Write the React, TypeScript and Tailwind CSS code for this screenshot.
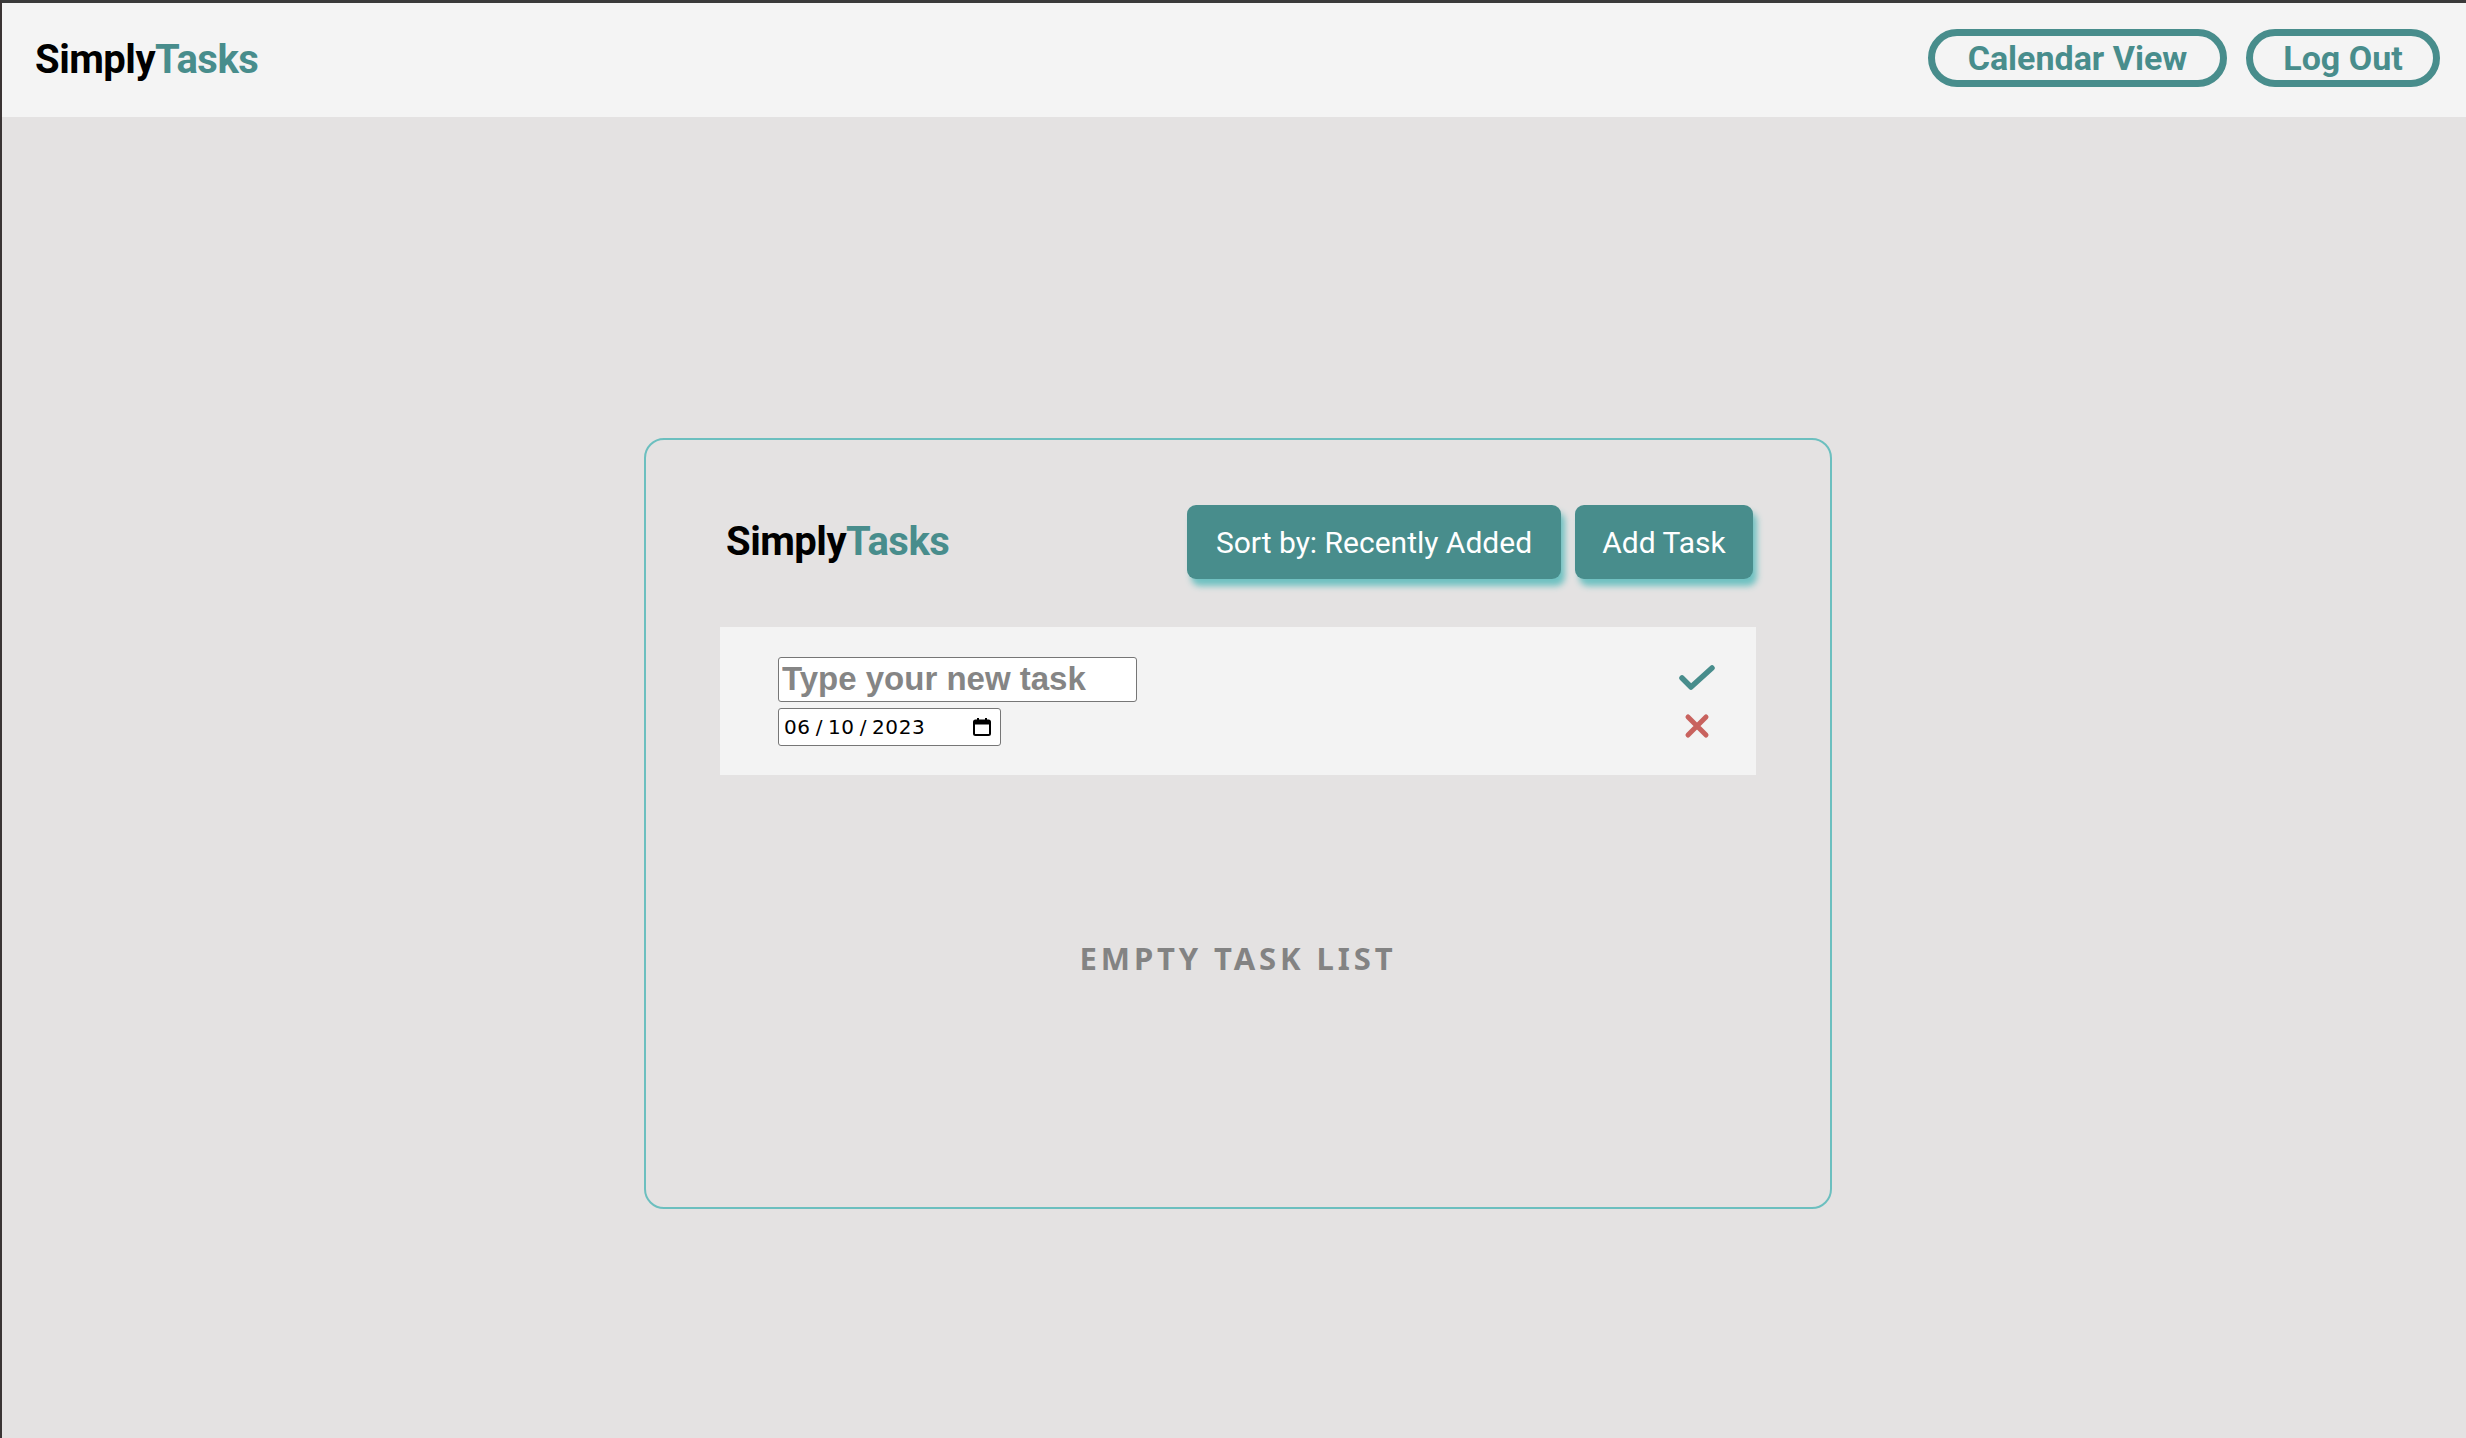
import { useState } from "react";

const teal = "#488d8c";

function Logo() {
  return (
    <h1 className="text-[40px] font-bold tracking-[-0.5px]" style={{ fontFamily: "Roboto, sans-serif" }}>
      <span className="text-black">Simply</span>
      <span className="text-[#488d8c]">Tasks</span>
    </h1>
  );
}

function DateField() {
  return (
    <div
      className="w-[223px] h-[38px] bg-white border-[1.5px] border-[#767676] rounded-[3px] pl-[5px] pr-[8px] flex items-center justify-between text-[20px] text-black"
      style={{ fontFamily: "'DejaVu Sans', sans-serif" }}
    >
      <div className="flex items-center gap-[5px] tracking-[0.6px]">
        <span>06</span>
        <span>/</span>
        <span>10</span>
        <span>/</span>
        <span>2023</span>
      </div>
      <svg width="20" height="20" viewBox="0 0 20 20">
        <rect x="2" y="3.5" width="16" height="14.5" rx="1.5" fill="none" stroke="black" strokeWidth="2" />
        <rect x="2" y="3.5" width="16" height="4" fill="black" />
        <rect x="5" y="1" width="2" height="4" fill="black" />
        <rect x="13" y="1" width="2" height="4" fill="black" />
      </svg>
    </div>
  );
}

export default function App() {
  const [task, setTask] = useState("");

  return (
    <div className="min-h-[1438px] bg-[#e4e2e2] border-l-2 border-t-[3px] border-l-[#3a3434] border-t-[#3a3a3a] flex flex-col">
      <header className="h-[114px] bg-[#f4f4f4] flex items-center justify-between pl-[33px] pr-[26px]">
        <Logo />
        <div className="flex gap-[19px] -mt-[4px]" style={{ fontFamily: "Roboto, sans-serif" }}>
          <button className="w-[299px] h-[58px] rounded-full border-[7px] border-[#488d8c] text-[#488d8c] text-[34px] font-bold leading-none">
            Calendar View
          </button>
          <button className="w-[194px] h-[58px] rounded-full border-[7px] border-[#488d8c] text-[#488d8c] text-[34px] font-bold leading-none">
            Log Out
          </button>
        </div>
      </header>

      <main className="flex justify-center pt-[321px] pl-[8px]">
        <div className="w-[1188px] h-[771px] rounded-[20px] border-2 border-[#6cbfbf] flex flex-col items-center pt-[65px]">
          <div className="w-[1036px] flex items-center justify-between pl-[6px] pr-[3px]">
            <Logo />
            <div className="flex gap-[14px]" style={{ fontFamily: "Roboto, sans-serif" }}>
              <button className="w-[374px] h-[74px] rounded-[9px] bg-[#488d8c] text-white text-[30px] shadow-[4px_7px_6px_#6fc1c1]">
                Sort by: Recently Added
              </button>
              <button className="w-[178px] h-[74px] rounded-[9px] bg-[#488d8c] text-white text-[30px] shadow-[4px_7px_6px_#6fc1c1]">
                Add Task
              </button>
            </div>
          </div>

          <div className="w-[1036px] h-[148px] mt-[48px] bg-[#f3f3f3] flex items-center justify-between pl-[58px] pr-[41px]">
            <div className="flex flex-col gap-[6px]">
              <input
                type="text"
                value={task}
                onChange={(e) => setTask(e.target.value)}
                placeholder="Type your new task"
                className="w-[359px] h-[45px] bg-white border-[1.5px] border-[#767676] rounded-[3px] px-[3px] text-[33px] font-bold placeholder:font-bold placeholder:text-[#858585] outline-none"
                style={{ fontFamily: "'Liberation Sans', Arial, sans-serif" }}
              />
              <DateField />
            </div>
            <div className="flex flex-col items-center gap-[22px] pt-[2px]">
              <svg width="36" height="26" viewBox="0 0 36 26">
                <path d="M3 13 L12 22 L33 3" fill="none" stroke={teal} strokeWidth="5.5" strokeLinecap="round" strokeLinejoin="round" />
              </svg>
              <svg width="26" height="26" viewBox="0 0 26 26">
                <path d="M4 4 L22 22 M22 4 L4 22" fill="none" stroke="#c8625e" strokeWidth="5" strokeLinecap="round" />
              </svg>
            </div>
          </div>

          <div className="flex-1 flex items-center justify-center pb-[66px]">
            <p
              className="text-[31px] font-bold tracking-[3.9px] text-[#838383] uppercase"
              style={{ fontFamily: "'Noto Sans', sans-serif" }}
            >
              Empty Task List
            </p>
          </div>
        </div>
      </main>
    </div>
  );
}
